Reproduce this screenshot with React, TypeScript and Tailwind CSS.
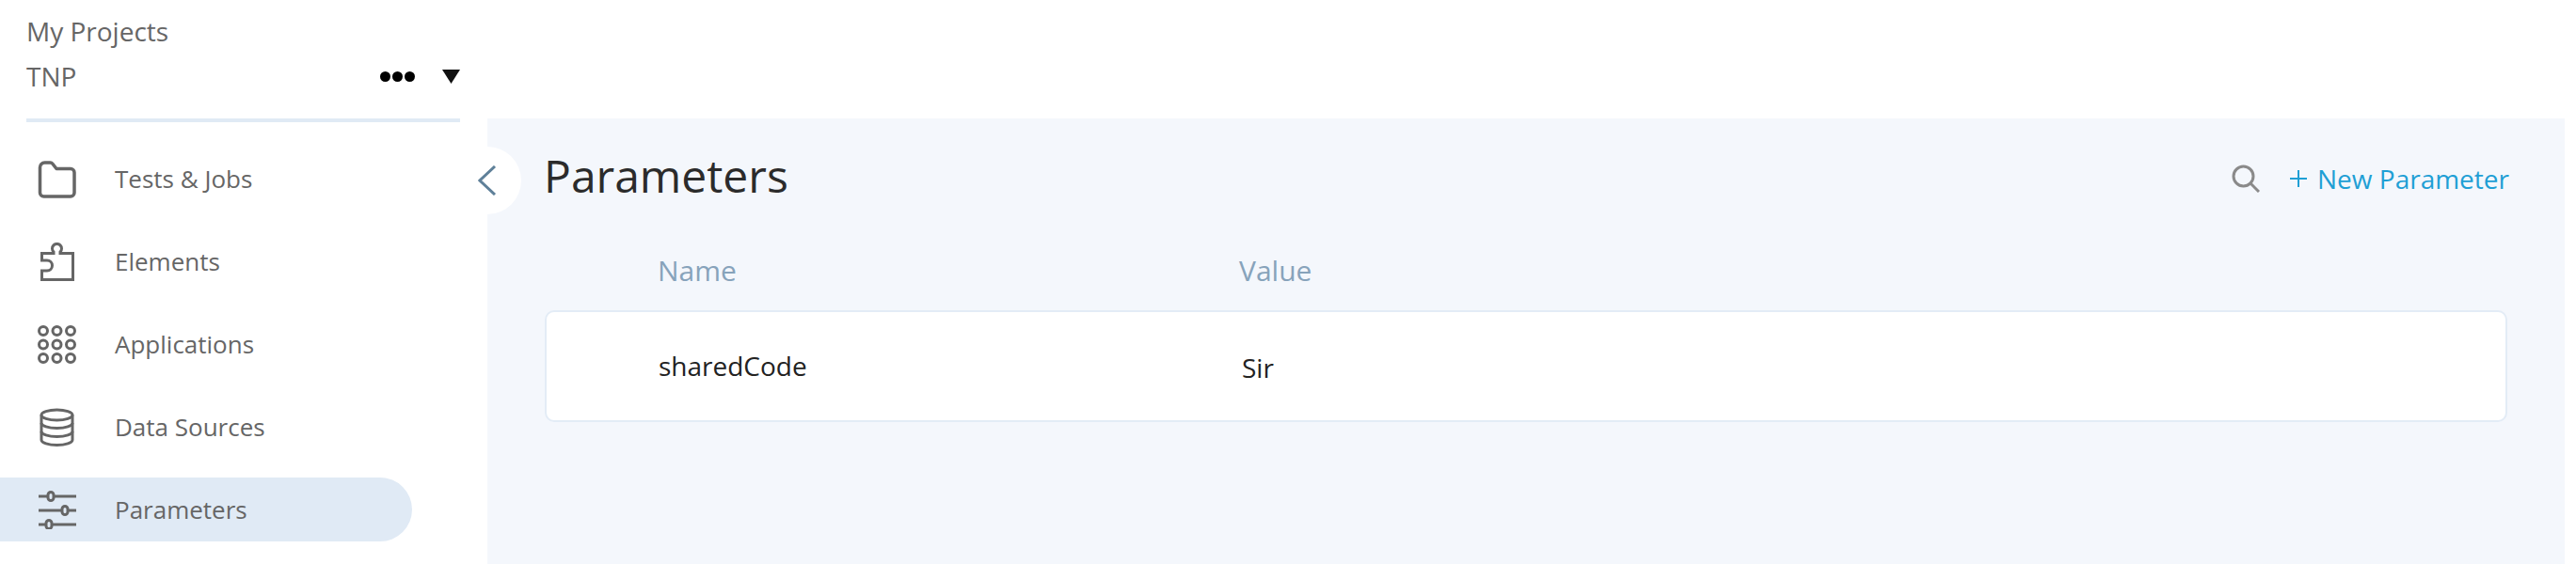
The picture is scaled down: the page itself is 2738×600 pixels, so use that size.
import React from "react";

const navIconClass = "w-[41px] h-[41px] shrink-0 text-[#666666]";

function FolderIcon() {
  return (
    <svg viewBox="0 0 41 41" fill="none" stroke="currentColor" strokeWidth={3.5} className={navIconClass}>
      <path d="M2.500 8a5 5 0 0 1 5-5h6a3 3 0 0 1 2.400 1.200L20 9.500h15a4 4 0 0 1 4 4V35a4 4 0 0 1-4 4H6.500a4 4 0 0 1-4-4z" strokeLinejoin="round" />
    </svg>
  );
}

function PuzzleIcon() {
  return (
    <svg viewBox="0 0 41 41" fill="none" stroke="currentColor" strokeWidth={3} className={navIconClass}>
      <path d="M4.500 19v-7.500H17V10a5 5 0 1 1 7 0v1.500h13.500v28h-33V30H10a5.500 5.500 0 0 0 0-11z" strokeLinejoin="miter" />
    </svg>
  );
}

function GridIcon() {
  const points = [6, 20.500, 35];
  return (
    <svg viewBox="0 0 41 41" fill="none" stroke="currentColor" strokeWidth={3} className={navIconClass}>
      {points.map((y) => points.map((x) => <circle key={`${x}-${y}`} cx={x} cy={y} r={4.500} />))}
    </svg>
  );
}

function DatabaseIcon() {
  return (
    <svg viewBox="0 0 41 41" fill="none" stroke="currentColor" strokeWidth={3} className={navIconClass}>
      <ellipse cx={20.500} cy={7.500} rx={16.500} ry={5.500} />
      <path d="M4 7.500V34c0 3 7.400 5.500 16.500 5.500S37 37 37 34V7.500" />
      <path d="M4 16c0 3 7.400 5.500 16.500 5.500S37 19 37 16" />
      <path d="M4 25c0 3 7.400 5.500 16.500 5.500S37 28 37 25" />
    </svg>
  );
}

function SlidersIcon() {
  return (
    <svg viewBox="0 0 41 41" fill="none" stroke="currentColor" strokeWidth={3} className={navIconClass}>
      <path d="M1 6h10M17 6h24M1 21h25M32 21h9M1 36h8M15 36h26" />
      <rect x={11} y={1.500} width={6} height={9} rx={3} />
      <rect x={26} y={16.500} width={6} height={9} rx={3} />
      <rect x={9} y={31.500} width={6} height={9} rx={3} />
    </svg>
  );
}

const navItems = [
  { label: "Tests & Jobs", icon: <FolderIcon /> },
  { label: "Elements", icon: <PuzzleIcon /> },
  { label: "Applications", icon: <GridIcon /> },
  { label: "Data Sources", icon: <DatabaseIcon /> },
  { label: "Parameters", icon: <SlidersIcon />, active: true },
];

export default function App() {
  return (
    <div className="flex h-[600px] overflow-hidden bg-white font-['Open_Sans',sans-serif] text-[#666666]">
      {/* Sidebar */}
      <aside className="w-[518px] shrink-0">
        <div className="ml-[28px] w-[461px] h-[130px] border-b-4 border-[#e0eaf5]">
          <div className="pt-[13px] text-[28px] leading-[40px]">My Projects</div>
          <div className="mt-[8px] flex items-center justify-between">
            <span className="text-[28px] leading-[40px]">TNP</span>
            <div className="flex items-center gap-[29px] pt-[1px]">
              <div className="flex gap-[2px]">
                <span className="w-[11px] h-[11px] rounded-full bg-black" />
                <span className="w-[11px] h-[11px] rounded-full bg-black" />
                <span className="w-[11px] h-[11px] rounded-full bg-black" />
              </div>
              <svg viewBox="0 0 19 15" className="w-[19px] h-[15px] fill-[#111111]">
                <path d="M0 0h19L9.500 15z" />
              </svg>
            </div>
          </div>
        </div>

        <nav className="mt-[26px] flex flex-col gap-[20px]">
          {navItems.map((item) => (
            <div
              key={item.label}
              className={`w-[438px] h-[68px] pl-[40px] flex items-center gap-[41px] rounded-r-[34px] ${item.active ? "bg-[#e0eaf5]" : ""}`}
            >
              {item.icon}
              <span className="text-[26px] text-[#666666]">{item.label}</span>
            </div>
          ))}
        </nav>
      </aside>

      {/* Main */}
      <div className="flex-1 pt-[126px] pr-[12px]">
        <main className="relative h-full bg-[#f4f7fc] px-[61px]">
          <button className="absolute left-[-36px] top-[30px] w-[72px] h-[72px] rounded-full bg-white flex items-center justify-center">
            <svg viewBox="0 0 20 32" fill="none" stroke="#5f8099" strokeWidth={3} className="w-[20px] h-[32px]">
              <path d="M18 1L2 16l16 15" />
            </svg>
          </button>

          <div className="flex items-center justify-between h-[128px]">
            <h1 className="text-[48px] font-normal text-[#2b2b2b] -ml-[1px] pb-[6px]">Parameters</h1>
            <div className="flex items-center pb-[1px]">
              <svg viewBox="0 0 30 30" fill="none" stroke="#8a8a8a" strokeWidth={3} className="w-[30px] h-[30px] mr-[32px]">
                <circle cx={12.500} cy={12.500} r={10.500} />
                <path d="M20 20l9 9" />
              </svg>
              <svg viewBox="0 0 18 18" fill="none" stroke="#1f9fd5" strokeWidth={2} className="w-[18px] h-[18px] mr-[11px]">
                <path d="M9 0v18M0 9h18" />
              </svg>
              <span className="text-[28px] leading-[40px] text-[#1f9fd5] -mr-[2px]">New Parameter</span>
            </div>
          </div>

          <div className="mt-[14px] grid grid-cols-[618px_1fr] pl-[120px] text-[30px] leading-[40px] text-[#87a3bb]">
            <span>Name</span>
            <span>Value</span>
          </div>

          <div className="mt-[22px] h-[119px] grid grid-cols-[620px_1fr] items-center pl-[119px] bg-white border-2 border-[#e3ecf6] rounded-[10px] text-[28px] text-[#222222]">
            <span className="pb-[2px]">sharedCode</span>
            <span className="pt-[3px]">Sir</span>
          </div>
        </main>
      </div>
    </div>
  );
}
